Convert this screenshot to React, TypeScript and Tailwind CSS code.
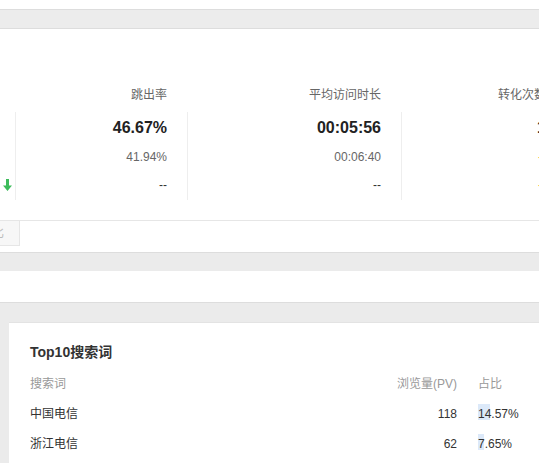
import React from "react";

const font = { fontFamily: '"Liberation Sans", "Noto Sans CJK SC", Arial, sans-serif' };

function DownArrow() {
  return (
    <svg width="9" height="12" viewBox="0 0 9 12">
      <path d="M3 0 H6 V6.5 H9 L4.5 12 L0 6.5 H3 Z" fill="#3dbb5b" />
    </svg>
  );
}

type Col = { w: string; label: string; value: string; sub: string; third: string; orange?: boolean };

const cols: Col[] = [
  { w: "w-[172px]", label: "跳出率", value: "46.67%", sub: "41.94%", third: "--" },
  { w: "w-[214px]", label: "平均访问时长", value: "00:05:56", sub: "00:06:40", third: "--" },
  { w: "w-[165px]", label: "转化次数", value: "1", sub: "--", third: "--", orange: true },
];

const rows = [
  { name: "中国电信", pv: "118", pct: 14.57 },
  { name: "浙江电信", pv: "62", pct: 7.65 },
];

export default function App() {
  return (
    <div className="w-[539px] h-[463px] overflow-hidden bg-white flex flex-col text-[12px]" style={font}>
      <div className="h-[9px] shrink-0 bg-white" />
      <div className="h-[20px] shrink-0 bg-[#ececec] border-t border-b border-[#dddddd]" />

      {/* stats */}
      <div className="h-[223px] shrink-0 bg-white flex flex-col pt-[58px]">
        <div className="flex h-[16px] leading-[16px] text-[#666]">
          <div className="w-[15px] shrink-0" />
          {cols.map((c) => (
            <div key={c.label} className={`${c.w} shrink-0 pr-[20px] text-right whitespace-nowrap`}>
              {c.label}
            </div>
          ))}
        </div>
        <div className="flex h-[88px] mt-[9px]">
          <div className="w-[15px] shrink-0 flex flex-col pt-[2px]">
            <div className="h-[30px]" />
            <div className="h-[29px]" />
            <div className="h-[30px] flex items-center justify-center pr-[1px]">
              <DownArrow />
            </div>
          </div>
          {cols.map((c) => (
            <div
              key={c.label}
              className={`${c.w} shrink-0 h-[88px] border-l border-[#eeeeee] pr-[20px] flex flex-col items-end pt-[2px] whitespace-nowrap`}
            >
              <div className="h-[30px] flex items-center text-[16px] font-bold text-[#222]">{c.value}</div>
              <div className={`h-[29px] flex items-center ${c.orange ? "text-[#f5a623]" : "text-[#666]"}`}>{c.sub}</div>
              <div className={`h-[30px] flex items-center ${c.orange ? "text-[#f5a623]" : "text-[#333]"}`}>{c.third}</div>
            </div>
          ))}
        </div>
        <div className="mt-[20px] h-[32px] border-t border-[#e6e6e6] flex items-start">
          <div className="w-[20px] h-[25px] bg-[#f7f7f7] border-r border-b border-[#e6e6e6] overflow-hidden flex items-center justify-end pr-[15px] text-[#bbb] whitespace-nowrap">
            比
          </div>
        </div>
      </div>

      <div className="h-[19px] shrink-0 bg-[#ebebeb] border-t border-[#dddddd]" />
      <div className="h-[31px] shrink-0 bg-white" />

      {/* card section */}
      <div className="flex-1 bg-[#ebebeb] border-t border-[#dddddd] pt-[19px] pl-[9px]">
        <div className="bg-white border-t border-[#e3e3e3] h-[200px] pt-[19px] pl-[21px]">
          <div className="h-[20px] leading-[20px] text-[14px] font-bold text-[#333]">Top10搜索词</div>
          <div className="mt-[7px]">
            <div className="flex h-[30px] items-center text-[#999]">
              <div className="w-[327px] shrink-0">搜索词</div>
              <div className="w-[100px] shrink-0 text-right">浏览量(PV)</div>
              <div className="pl-[21px] whitespace-nowrap">占比</div>
            </div>
            {rows.map((r) => (
              <div key={r.name} className="flex h-[30px] items-center text-[#333]">
                <div className="w-[327px] shrink-0">{r.name}</div>
                <div className="w-[100px] shrink-0 text-right">{r.pv}</div>
                <div className="pl-[21px] whitespace-nowrap">
                  <span className="relative inline-block">
                    <span
                      className="absolute left-0 top-[-1px] h-[16px] bg-[#dce9f9]"
                      style={{ width: `${(r.pct * 0.82).toFixed(1)}px` }}
                    />
                    <span className="relative">{r.pct.toFixed(2)}%</span>
                  </span>
                </div>
              </div>
            ))}
          </div>
        </div>
      </div>
    </div>
  );
}
